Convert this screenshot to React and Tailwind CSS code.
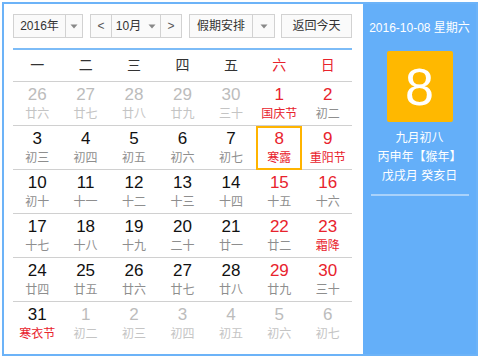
import React from 'react';

const font = { fontFamily: '"Liberation Sans", "Noto Sans CJK SC", sans-serif' };

const weeks = ['一', '二', '三', '四', '五', '六', '日'];

// [day, lunar, other month, festival]
const rows = [
  [[26, '廿六', 1], [27, '廿七', 1], [28, '廿八', 1], [29, '廿九', 1], [30, '三十', 1], [1, '国庆节', 0, 1], [2, '初二']],
  [[3, '初三'], [4, '初四'], [5, '初五'], [6, '初六'], [7, '初七'], [8, '寒露', 0, 1], [9, '重阳节', 0, 1]],
  [[10, '初十'], [11, '十一'], [12, '十二'], [13, '十三'], [14, '十四'], [15, '十五'], [16, '十六']],
  [[17, '十七'], [18, '十八'], [19, '十九'], [20, '二十'], [21, '廿一'], [22, '廿二'], [23, '霜降', 0, 1]],
  [[24, '廿四'], [25, '廿五'], [26, '廿六'], [27, '廿七'], [28, '廿八'], [29, '廿九'], [30, '三十']],
  [[31, '寒衣节', 0, 1], [1, '初二', 1], [2, '初三', 1], [3, '初四', 1], [4, '初五', 1], [5, '初六', 1], [6, '初七', 1]],
];

function Arrow() {
  return (
    <svg width="8" height="5" viewBox="0 0 8 5">
      <path d="M0.5 0.5h7L4 4.5z" fill="#888" />
    </svg>
  );
}

function Cell({ cell, col }) {
  const [day, lunar, other, fest] = cell;
  const weekend = col >= 5;
  const selected = day === 8 && !other;
  let numColor = 'text-[#111]';
  if (other) numColor = 'text-[#bcbcbc]';
  else if (weekend) numColor = 'text-[#e8232d]';
  let lunarColor = 'text-[#8e8e8e]';
  if (other) lunarColor = 'text-[#c4c4c4]';
  else if (fest) lunarColor = 'text-[#e8232d]';
  return (
    <div className="flex items-center justify-center h-[43px]">
      <div
        className={`flex flex-col items-center justify-center w-[46px] h-[44px] ${
          selected ? 'border-2 border-[#ffb400]' : ''
        }`}
      >
        <div className={`text-[17px] leading-[20px] ${numColor}`}>{day}</div>
        <div className={`text-[12px] leading-[16px] mt-[1px] ${lunarColor}`}>{lunar}</div>
      </div>
    </div>
  );
}

export default function App() {
  return (
    <div className="w-[480px] h-[360px] bg-white p-[2px]" style={font}>
      <div className="flex h-[354px] border-2 border-[#6cb3f8]">
        {/* Left: calendar */}
        <div className="w-[359px] pl-[9px] pr-[11px] pt-[10px] bg-white">
          <div className="flex items-center h-[24px] text-[12px] text-[#333]">
            <div className="flex h-[24px] w-[70px] border border-[#d2d2d2] bg-[#fafafa]">
              <div className="w-[51px] flex items-center justify-center">2016年</div>
              <div className="flex-1 flex items-center justify-center border-l border-[#d2d2d2]">
                <Arrow />
              </div>
            </div>
            <div className="flex h-[24px] w-[92px] ml-[7px] border border-[#d2d2d2] bg-[#fafafa]">
              <div className="w-[20px] flex items-center justify-center text-[#555]">&lt;</div>
              <div className="flex-1 flex items-center justify-center gap-[7px] border-x border-[#d2d2d2]">
                <span>10月</span>
                <Arrow />
              </div>
              <div className="w-[20px] flex items-center justify-center text-[#555]">&gt;</div>
            </div>
            <div className="flex h-[24px] w-[86px] ml-[7px] border border-[#d2d2d2] bg-[#fafafa]">
              <div className="w-[62px] flex items-center justify-center">假期安排</div>
              <div className="flex-1 flex items-center justify-center border-l border-[#d2d2d2]">
                <Arrow />
              </div>
            </div>
            <div className="flex h-[24px] w-[71px] ml-[6px] items-center justify-center border border-[#d2d2d2] bg-[#fafafa]">
              返回今天
            </div>
          </div>
          <div className="mt-[10px] h-[2px] bg-[#7dbcf7]" />
          <div className="grid grid-cols-7 h-[32px] border-b border-[#d0d0d0] text-[14px]">
            {weeks.map((w, i) => (
              <div
                key={w}
                className={`flex items-center justify-center ${i >= 5 ? 'text-[#e8232d]' : 'text-[#333]'}`}
              >
                {w}
              </div>
            ))}
          </div>
          {rows.map((r, ri) => (
            <div
              key={ri}
              className={`grid grid-cols-7 ${ri < rows.length - 1 ? 'border-b border-[#d0d0d0]' : ''}`}
            >
              {r.map((c, ci) => (
                <Cell key={ci} cell={c} col={ci} />
              ))}
            </div>
          ))}
        </div>
        {/* Right: today panel */}
        <div className="flex-1 bg-[#64aff9] flex flex-col items-center text-white">
          <div className="mt-[15px] text-[12px] leading-[18px]">2016-10-08 星期六</div>
          <div className="mt-[14px] w-[66px] h-[71px] bg-[#ffb800] rounded-[2px] flex items-center justify-center text-[52px] leading-none">
            8
          </div>
          <div className="mt-[7px] text-[12px] leading-[19px] text-center">
            <div>九月初八</div>
            <div>丙申年【猴年】</div>
            <div>戊戌月 癸亥日</div>
          </div>
          <div className="mt-[8px] w-[98px] h-[2px] bg-[#a9d2fb]" />
        </div>
      </div>
    </div>
  );
}
